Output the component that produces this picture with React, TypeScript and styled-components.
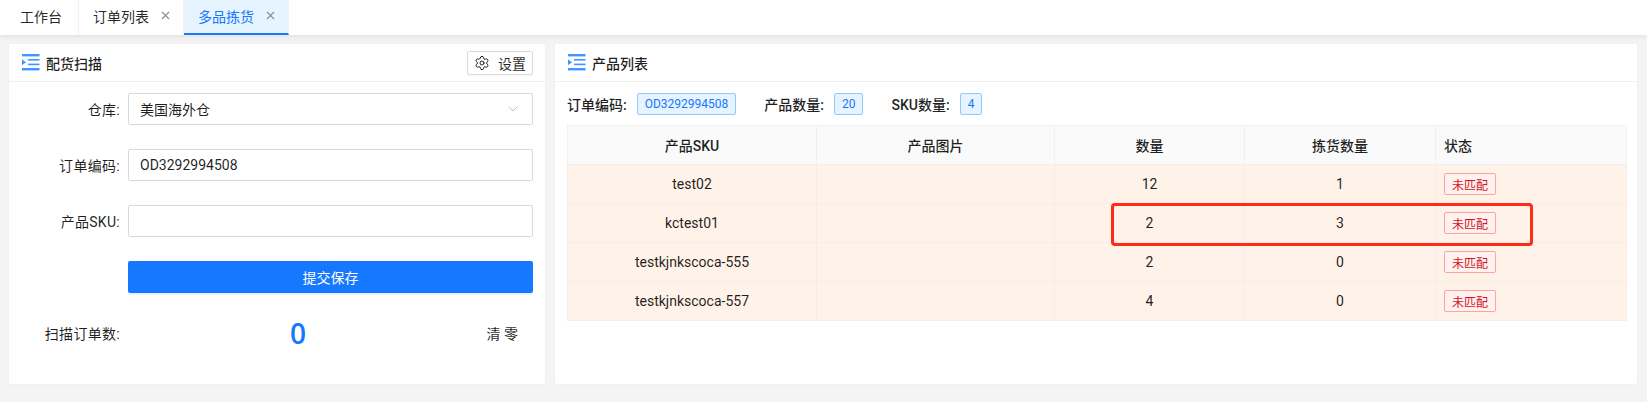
import React from 'react';
import styled, { createGlobalStyle } from 'styled-components';
import { X, ChevronDown, Settings } from 'lucide-react';

const GlobalStyle = createGlobalStyle`
  html, body {
    margin: 0;
    padding: 0;
    background: #f4f4f4;
    font-family: Roboto, "Noto Sans CJK SC", sans-serif;
    font-size: 14px;
    color: rgba(0, 0, 0, 0.88);
  }
  * { box-sizing: border-box; }
`;

const Page = styled.div`
  width: 1647px;
  height: 402px;
  overflow: hidden;
  display: flex;
  flex-direction: column;
`;

const TabBar = styled.div`
  height: 35px;
  flex: none;
  background: #fff;
  display: flex;
  box-shadow: 0 1px 6px rgba(0, 0, 0, 0.1);
`;

const Tab = styled.div<{ $active?: boolean }>`
  display: flex;
  align-items: center;
  padding: 0 11px 2px 14px;
  gap: 10px;
  height: 35px;
  border-right: 1px solid ${({ $active }) => ($active ? 'transparent' : '#f0f0f0')};
  border-bottom: 2px solid ${({ $active }) => ($active ? '#1677ff' : 'transparent')};
  background: ${({ $active }) => ($active ? '#e6f4ff' : '#fff')};
  color: ${({ $active }) => ($active ? '#1677ff' : 'rgba(0,0,0,0.85)')};
  svg { color: #8c8c8c; }
`;

const HomeTab = styled(Tab)`
  padding: 0 16px 2px 20px;
`;

const Content = styled.div`
  flex: 1;
  display: flex;
  gap: 8px;
  padding: 8px 9px 17px 8px;
  align-items: stretch;
`;

const Panel = styled.section<{ $width: number }>`
  width: ${({ $width }) => $width}px;
  flex: none;
  background: #fff;
  border: 1px solid #f0f0f0;
  border-radius: 2px;
  display: flex;
  flex-direction: column;
`;

const PanelHeader = styled.header`
  height: 38px;
  flex: none;
  display: flex;
  align-items: center;
  justify-content: space-between;
  padding: 0 12px 0 13px;
  border-bottom: 1px solid #f0f0f0;
`;

const PanelTitle = styled.div`
  display: flex;
  align-items: center;
  gap: 6px;
  font-weight: 500;
`;

const SettingButton = styled.button`
  height: 24px;
  width: 66px;
  display: flex;
  align-items: center;
  justify-content: center;
  gap: 8px;
  padding: 0;
  background: #fff;
  border: 1px solid #d9d9d9;
  border-radius: 2px;
  font: inherit;
  color: rgba(0, 0, 0, 0.85);
  box-shadow: 0 2px 0 rgba(0, 0, 0, 0.02);
`;

const Form = styled.div`
  padding: 11px 12px 0 0;
  display: flex;
  flex-direction: column;
  gap: 24px;
`;

const FormRow = styled.div`
  display: flex;
  align-items: center;
  gap: 7px;
`;

const FormLabel = styled.label`
  width: 112px;
  flex: none;
  padding-right: 1px;
  letter-spacing: 0.3px;
  text-align: right;
`;

const Field = styled.div`
  flex: 1;
  height: 32px;
  display: flex;
  align-items: center;
  justify-content: space-between;
  padding: 0 11px;
  background: #fff;
  border: 1px solid #d9d9d9;
  border-radius: 2px;
  svg { color: #bfbfbf; }
`;

const SubmitButton = styled.button`
  flex: 1;
  height: 32px;
  border: none;
  border-radius: 2px;
  background: #1677ff;
  color: #fff;
  font: inherit;
  box-shadow: 0 2px 0 rgba(5, 145, 255, 0.1);
`;

const ScanValue = styled.div`
  flex: 1;
  display: flex;
  align-items: center;
  justify-content: space-between;
  padding: 0 15px 0 162px;
`;

const ScanCount = styled.span`
  font-size: 28px;
  line-height: 32px;
  font-weight: 600;
  color: #1677ff;
  font-family: "Open Sans", sans-serif;
`;

const TableArea = styled.div`
  position: relative;
  padding: 11px 11px 0 12px;
`;

const Summary = styled.div`
  display: flex;
  align-items: center;
  height: 22px;
  margin-bottom: 10px;
  gap: 10px;
`;

const SummaryLabel = styled.span<{ $gap?: boolean }>`
  font-weight: 500;
  margin-left: ${({ $gap }) => ($gap ? '18px' : '0')};
`;

const InfoTag = styled.span`
  height: 22px;
  padding: 0 7px;
  display: inline-flex;
  align-items: center;
  font-size: 12px;
  color: #1677ff;
  background: #e6f4ff;
  border: 1px solid #91caff;
  border-radius: 2px;
`;

const Table = styled.table`
  width: 1059px;
  border-collapse: collapse;
  table-layout: fixed;
  border: 1px solid #f0f0f0;
`;

const Th = styled.th<{ $left?: boolean }>`
  height: 39px;
  padding: 0 8px;
  font-weight: 500;
  background: #fafafa;
  border: 1px solid #f0f0f0;
  text-align: ${({ $left }) => ($left ? 'left' : 'center')};
`;

const Td = styled.td<{ $left?: boolean }>`
  height: 39px;
  padding: 0 8px;
  background: #fff2e8;
  border: 1px solid #f5ede6;
  text-align: ${({ $left }) => ($left ? 'left' : 'center')};
`;

const StatusTag = styled.span`
  display: inline-flex;
  align-items: center;
  height: 22px;
  padding: 0 7px;
  font-size: 12px;
  color: #cf1322;
  background: #fff1f0;
  border: 1px solid #ffa39e;
  border-radius: 2px;
  vertical-align: middle;
`;

// the hand-drawn red marker over the second row
const Marker = styled.div`
  position: absolute;
  left: 556px;
  top: 121px;
  width: 422px;
  height: 43px;
  border: 3px solid #ff2a1a;
  border-radius: 4px;
  pointer-events: none;
`;

const ListIcon = () => (
  <svg width="18" height="17" viewBox="0 0 18 17">
    <g fill="#4096ff">
      <rect x="0" y="0" width="17.5" height="2.4" />
      <rect x="0" y="14" width="17.5" height="2.4" />
      <rect x="6" y="5" width="11.5" height="1.6" />
      <rect x="6" y="9.6" width="11.5" height="1.6" />
      <path d="M0 5.2 L4 8.2 L0 11.2 Z" />
    </g>
  </svg>
);

const rows = [
  { sku: 'test02', qty: 12, picked: 1 },
  { sku: 'kctest01', qty: 2, picked: 3 },
  { sku: 'testkjnkscoca-555', qty: 2, picked: 0 },
  { sku: 'testkjnkscoca-557', qty: 4, picked: 0 },
];

const columns = [249, 238, 190, 191, 191];

export default function App() {
  return (
    <Page>
      <GlobalStyle />
      <TabBar>
        <HomeTab>工作台</HomeTab>
        <Tab>订单列表<X size={13} /></Tab>
        <Tab $active>多品拣货<X size={13} /></Tab>
      </TabBar>
      <Content>
        <Panel $width={538}>
          <PanelHeader>
            <PanelTitle><ListIcon />配货扫描</PanelTitle>
            <SettingButton><Settings size={16} strokeWidth={1.5} />设置</SettingButton>
          </PanelHeader>
          <Form>
            <FormRow>
              <FormLabel>仓库:</FormLabel>
              <Field>美国海外仓<ChevronDown size={16} strokeWidth={1.5} /></Field>
            </FormRow>
            <FormRow>
              <FormLabel>订单编码:</FormLabel>
              <Field>OD3292994508</Field>
            </FormRow>
            <FormRow>
              <FormLabel>产品SKU:</FormLabel>
              <Field />
            </FormRow>
            <FormRow>
              <FormLabel />
              <SubmitButton>提交保存</SubmitButton>
            </FormRow>
            <FormRow>
              <FormLabel>扫描订单数:</FormLabel>
              <ScanValue>
                <ScanCount>0</ScanCount>
                <span>清 零</span>
              </ScanValue>
            </FormRow>
          </Form>
        </Panel>
        <Panel $width={1084}>
          <PanelHeader>
            <PanelTitle><ListIcon />产品列表</PanelTitle>
          </PanelHeader>
          <TableArea>
            <Summary>
              <SummaryLabel>订单编码:</SummaryLabel>
              <InfoTag>OD3292994508</InfoTag>
              <SummaryLabel $gap>产品数量:</SummaryLabel>
              <InfoTag>20</InfoTag>
              <SummaryLabel $gap>SKU数量:</SummaryLabel>
              <InfoTag>4</InfoTag>
            </Summary>
            <Table>
              <colgroup>
                {columns.map((w, i) => <col key={i} width={w} />)}
              </colgroup>
              <thead>
                <tr>
                  <Th>产品SKU</Th>
                  <Th>产品图片</Th>
                  <Th>数量</Th>
                  <Th>拣货数量</Th>
                  <Th $left>状态</Th>
                </tr>
              </thead>
              <tbody>
                {rows.map((row) => (
                  <tr key={row.sku}>
                    <Td>{row.sku}</Td>
                    <Td />
                    <Td>{row.qty}</Td>
                    <Td>{row.picked}</Td>
                    <Td $left><StatusTag>未匹配</StatusTag></Td>
                  </tr>
                ))}
              </tbody>
            </Table>
            <Marker />
          </TableArea>
        </Panel>
      </Content>
    </Page>
  );
}
